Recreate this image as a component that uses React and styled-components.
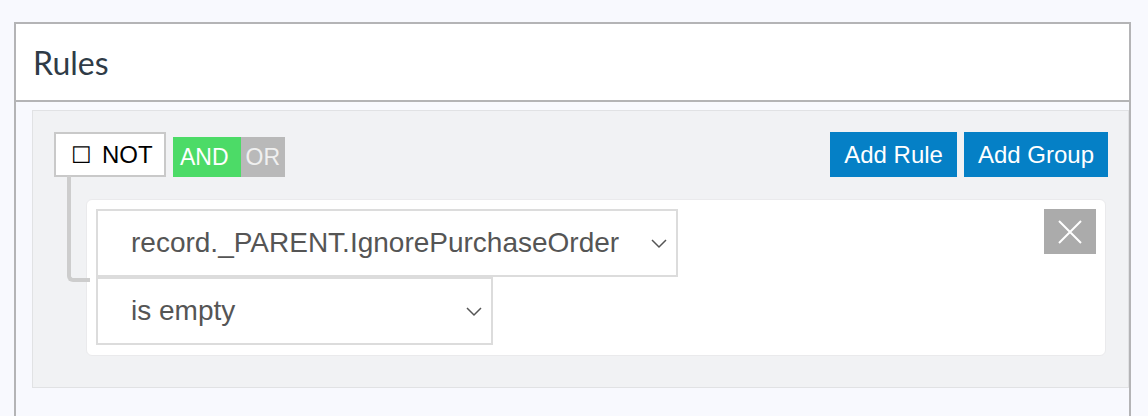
import styled, { createGlobalStyle } from "styled-components";

const GlobalStyle = createGlobalStyle`
  html, body {
    margin: 0;
    padding: 0;
    background: #f8f9fe;
  }
  body {
    font-family: "Liberation Sans", Arial, sans-serif;
  }
`

const Page = styled.div`
  padding: 22px 17px 0 14px;
  height: 416px;
  box-sizing: border-box;
  overflow: hidden;
`
const Panel = styled.div`
  border: 2px solid #b4b4b6;
  border-bottom: 0;
  height: 100%;
  box-sizing: border-box;
`
const PanelHeader = styled.div`
  background: #fff;
  height: 76px;
  border-bottom: 2px solid #b4b4b6;
  display: flex;
  align-items: center;
  padding-left: 17px;
  font-family: "Lato", "Open Sans", sans-serif;
  font-size: 32px;
  color: #2f3b47;
`
const PanelBody = styled.div`
  padding: 8px 0 0 16px;
`
const GroupBox = styled.div`
  position: relative;
  background: #f1f2f4;
  border: 1px solid #e1e2e4;
  padding: 21px 20px 31px 21px;
`
const GroupHeader = styled.div`
  display: flex;
  align-items: flex-end;
  height: 45px;
`
const NotToggle = styled.div`
  display: flex;
  align-items: center;
  gap: 10px;
  box-sizing: border-box;
  width: 112px;
  height: 45px;
  padding-left: 15px;
  background: #fff;
  border: 2px solid #c9c9c9;
  font-size: 24px;
  color: #000;
`
const Box = styled.span`
  font-family: "DejaVu Sans", sans-serif;
  font-size: 23px;
  font-weight: 300;
`
const Conjunctions = styled.div`
  display: flex;
  margin-left: 7px;
  height: 40px;
`
const Conjunction = styled.div`
  display: flex;
  align-items: center;
  padding: 0 ${(p) => (p.$wide ? "12px" : "5px")} 0 ${(p) => (p.$wide ? "7px" : "5px")};
  font-size: 23px;
  color: ${(p) => (p.$active ? "#fff" : "#f0f0f0")};
  background: ${(p) => (p.$active ? "#4cdb67" : "#b9b9b9")};
`
const Actions = styled.div`
  margin-left: auto;
  display: flex;
  gap: 7px;
  align-self: stretch;
`
const Button = styled.button`
  border: 0;
  background: #0580c6;
  color: #fff;
  font-family: "Liberation Sans", Arial, sans-serif;
  font-size: 24px;
  padding: 0 14px;
  height: 45px;
`
const Rules = styled.div`
  margin: 22px 2px 0 32px;
  position: relative;

  &::before {
    content: "";
    position: absolute;
    left: -19px;
    top: -23px;
    width: 19px;
    height: 102px;
    border-left: 4px solid #cdcdcd;
    border-bottom: 4px solid #cdcdcd;
    border-bottom-left-radius: 6px;
  }
`
const RuleCard = styled.div`
  display: flex;
  align-items: flex-start;
  background: #fff;
  border: 1px solid #eaeaec;
  border-radius: 6px;
  padding: 9px 9px 10px 9px;
`
const Fields = styled.div`
  display: flex;
  flex-direction: column;
`
const Select = styled.div`
  display: flex;
  align-items: center;
  justify-content: space-between;
  box-sizing: border-box;
  width: ${(p) => p.$width}px;
  height: 68px;
  padding: 0 8px 0 33px;
  background: #fff;
  border: 2px solid #dcdcdc;
  font-size: 28px;
  color: #555;
`
const Remove = styled.button`
  margin-left: auto;
  width: 52px;
  height: 45px;
  border: 0;
  background: #ababab;
  display: flex;
  align-items: center;
  justify-content: center;
  padding: 0;
`

function Chevron() {
  return (
    <svg width="18" height="12" viewBox="0 0 18 12">
      <path d="M2 3 L9 10 L16 3" fill="none" stroke="#555" strokeWidth="1.5" />
    </svg>
  )
}

export default function App() {
  return (
    <>
      <GlobalStyle />
      <Page>
        <Panel>
          <PanelHeader>Rules</PanelHeader>
          <PanelBody>
            <GroupBox>
              <GroupHeader>
                <NotToggle>
                  <Box>☐</Box>
                  NOT
                </NotToggle>
                <Conjunctions>
                  <Conjunction $active $wide>AND</Conjunction>
                  <Conjunction>OR</Conjunction>
                </Conjunctions>
                <Actions>
                  <Button>Add Rule</Button>
                  <Button>Add Group</Button>
                </Actions>
              </GroupHeader>
              <Rules>
                <RuleCard>
                  <Fields>
                    <Select $width={582}>
                      record._PARENT.IgnorePurchaseOrder
                      <Chevron />
                    </Select>
                    <Select $width={397}>
                      is empty
                      <Chevron />
                    </Select>
                  </Fields>
                  <Remove>
                    <svg width="26" height="26" viewBox="0 0 26 26">
                      <path d="M2 2 L24 24 M24 2 L2 24" stroke="#fff" strokeWidth="2" />
                    </svg>
                  </Remove>
                </RuleCard>
              </Rules>
            </GroupBox>
          </PanelBody>
        </Panel>
      </Page>
    </>
  )
}
